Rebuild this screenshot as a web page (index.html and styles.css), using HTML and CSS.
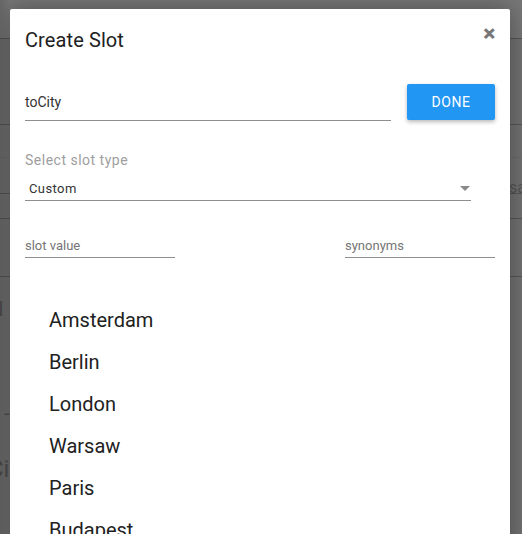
FILE: index.html
```html
<!DOCTYPE html>
<html>
<head>
<meta charset="utf-8">
<link rel="stylesheet" href="styles.css">
</head>
<body>
<div class="page">
  <div class="bg-row h39"></div>
  <div class="bg-row h86"></div>
  <div class="bg-row h33"></div>
  <div class="bg-row h36 right-text"><span>sa</span></div>
  <div class="bg-row h25"></div>
  <div class="bg-row h58"></div>
  <div class="bg-text t1">el</div>
  <div class="bg-text t2">o -</div>
  <div class="bg-text t3">Ci</div>
</div>
<div class="overlay">
  <div class="modal">
    <div class="head">
      <h1 class="title">Create Slot</h1>
      <span class="close">✕</span>
    </div>
    <div class="name-row">
      <div class="field name-field"><span class="value">toCity</span></div>
      <button class="done">DONE</button>
    </div>
    <div class="type-label">Select slot type</div>
    <div class="select">
      <span class="select-value">Custom</span>
      <span class="caret"></span>
    </div>
    <div class="value-row">
      <div class="field small"><span class="placeholder">slot value</span></div>
      <div class="field small"><span class="placeholder">synonyms</span></div>
    </div>
    <ul class="cities">
      <li>Amsterdam</li>
      <li>Berlin</li>
      <li>London</li>
      <li>Warsaw</li>
      <li>Paris</li>
      <li>Budapest</li>
    </ul>
  </div>
</div>
</body>
</html>
```
FILE: styles.css
```css
* { box-sizing: border-box; }
html, body { margin: 0; padding: 0; }
body {
  width: 522px;
  height: 534px;
  overflow: hidden;
  background: #717171;
  font-family: Roboto, "Liberation Sans", sans-serif;
  position: relative;
}
.page {
  display: flex;
  flex-direction: column;
  width: 522px;
  height: 534px;
}
.bg-row { border-bottom: 1px solid #555; flex: none; }
.h39 { height: 39px; background: #777; }
.h86 { height: 86px; }
.h33 { height: 33px; border-bottom-color: #6a6a6a; }
.h36 { height: 36px; }
.h25 { height: 25px; }
.h58 { height: 58px; }
.right-text { display: flex; justify-content: flex-end; align-items: center; padding-right: 0; }
.right-text span { font-size: 16px; color: #555; margin-right: -4px; margin-top: 24px; }
.bg-text { color: #505050; font-size: 20px; margin-left: -12px; flex: none; }
.t1 { margin-top: 20px; }
.t2 { margin-top: 80px; }
.t3 { margin-top: 30px; font-size: 24px; }

.overlay {
  position: absolute;
  inset: 0;
  background: linear-gradient(to right, rgba(0,0,0,0.12), rgba(0,0,0,0) 10px);
}
.modal {
  position: absolute;
  left: 10px;
  top: 9px;
  width: 500px;
  height: 560px;
  background: #fff;
  border-radius: 2px;
  box-shadow: 0 0 24px rgba(0,0,0,0.35);
  padding: 0 15px;
}
.head {
  display: flex;
  justify-content: space-between;
  align-items: flex-start;
  height: 75px;
}
.title {
  margin: 19px 0 0 0;
  font-weight: 400;
  font-size: 20px;
  color: #212121;
  letter-spacing: 0.1px;
}
.close {
  margin-top: 16px;
  margin-right: -1px;
  font-size: 15px;
  font-weight: 700;
  color: #777;
  -webkit-text-stroke: 0.8px #777;
}
.name-row {
  display: flex;
  align-items: flex-start;
  justify-content: space-between;
}
.field { border-bottom: 1px solid #8e8e8e; }
.name-field {
  width: 366px;
  height: 37px;
  padding-top: 8px;
  margin-top: 0;
}
.value { font-size: 14px; color: #333; }
.done {
  margin-top: 0;
  margin-right: 0;
  width: 88px;
  height: 36px;
  border: none;
  border-radius: 2px;
  background: #2196f3;
  color: #fff;
  font-family: Roboto, "Liberation Sans", sans-serif;
  font-size: 14px;
  letter-spacing: 0.6px;
  box-shadow: 0 2px 4px rgba(0,0,0,0.28);
  padding: 0;
}
.type-label {
  margin-top: 31px;
  font-size: 14px;
  color: #9e9e9e;
  letter-spacing: 0.5px;
}
.select {
  display: flex;
  justify-content: space-between;
  align-items: center;
  width: 446px;
  height: 33px;
  border-bottom: 1px solid #8e8e8e;
  padding: 8px 0 0 4px;
}
.select-value { font-size: 13px; color: #333; letter-spacing: 0.4px; }
.caret {
  width: 0;
  height: 0;
  border-left: 5px solid transparent;
  border-right: 5px solid transparent;
  border-top: 5px solid #8a8a8a;
  margin-right: 1px;
}
.value-row {
  display: flex;
  justify-content: space-between;
  margin-top: 34px;
}
.small {
  width: 150px;
  height: 23px;
}
.placeholder { font-size: 13px; color: #757575; }
.cities {
  list-style: none;
  margin: 50px 0 0 0;
  padding: 0 0 0 24px;
}
.cities li {
  font-size: 20px;
  color: #212121;
  height: 42px;
  line-height: 24px;
}
```
